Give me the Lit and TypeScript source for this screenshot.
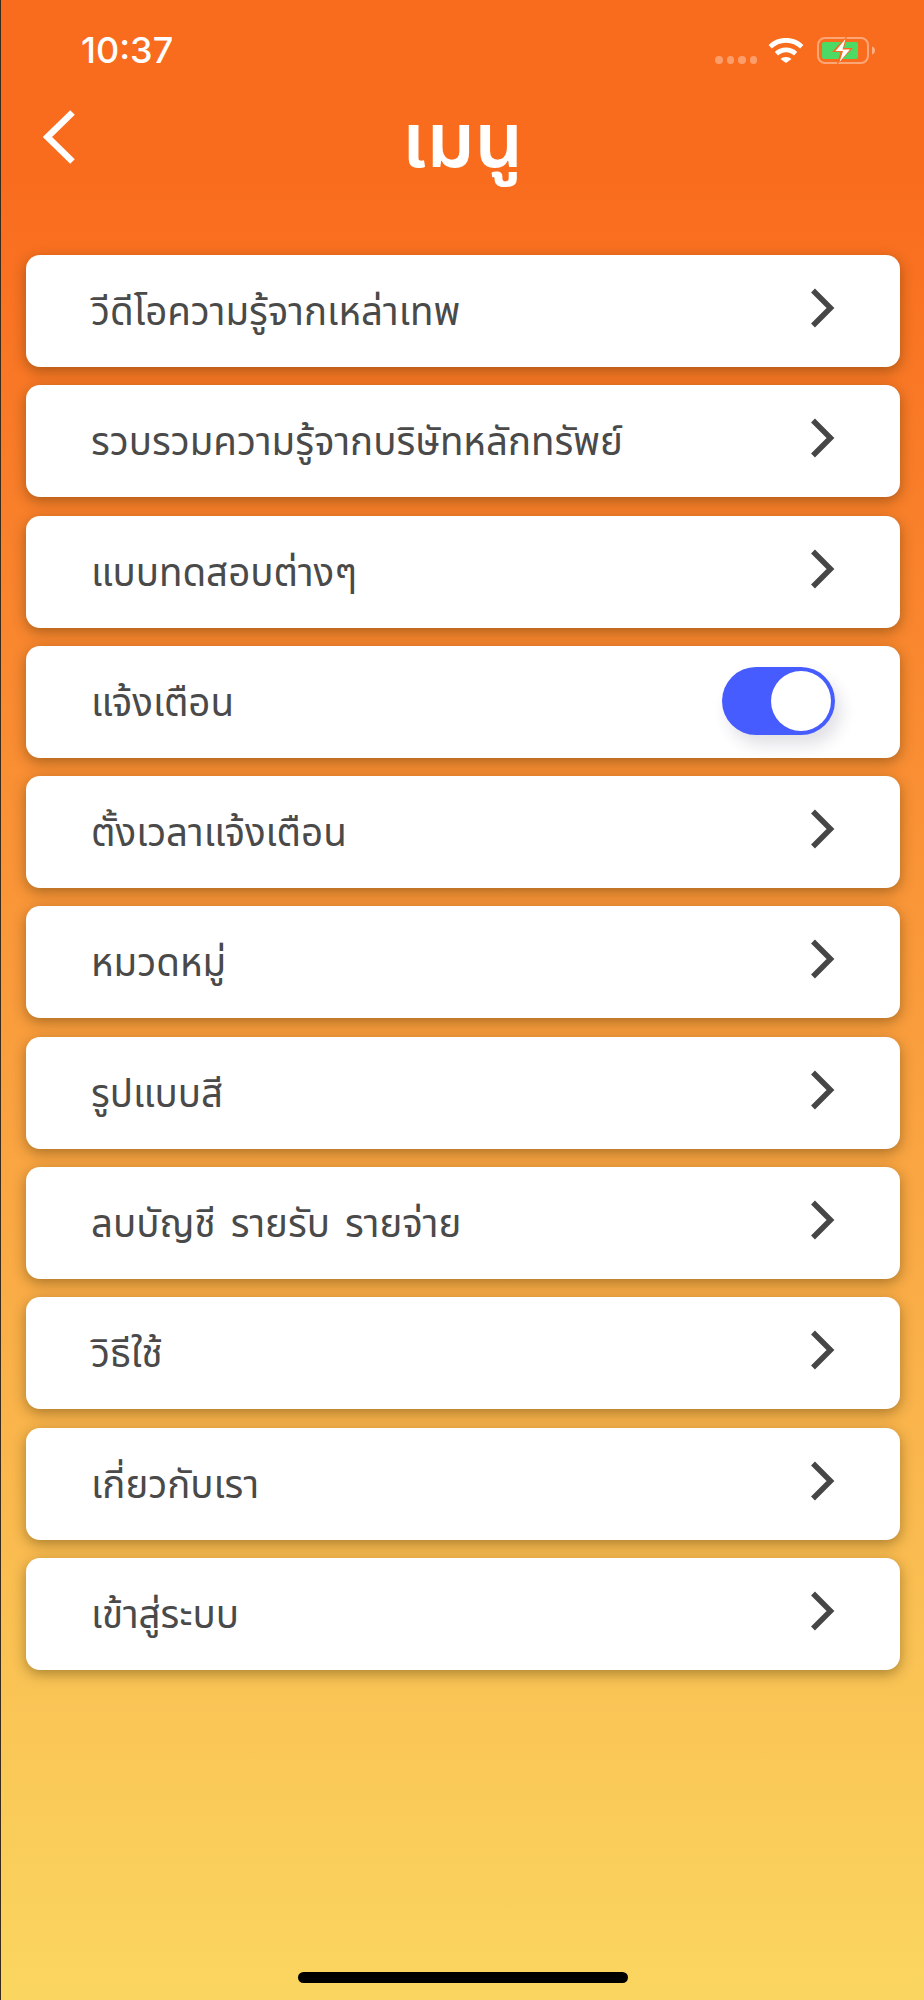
import { LitElement, html, css, svg } from 'lit';
import { customElement } from 'lit/decorators.js';

const items = [
  { label: 'วีดีโอความรู้จากเหล่าเทพ' },
  { label: 'รวบรวมความรู้จากบริษัทหลักทรัพย์' },
  { label: 'แบบทดสอบต่างๆ' },
  { label: 'แจ้งเตือน', toggle: true },
  { label: 'ตั้งเวลาแจ้งเตือน' },
  { label: 'หมวดหมู่' },
  { label: 'รูปแบบสี' },
  { label: 'ลบบัญชี รายรับ รายจ่าย' },
  { label: 'วิธีใช้' },
  { label: 'เกี่ยวกับเรา' },
  { label: 'เข้าสู่ระบบ' },
];

const chevron = html`<svg class="chevron" width="27" height="44" viewBox="0 0 27 44">
  <path d="M5 4.500 L22.500 22 L5 39.500" fill="none" stroke="#464646" stroke-width="5.500" />
</svg>`;

const wifi = svg`<path fill="#fff" d="M18 1C11 1 5 3.600 0.600 8l3.200 3.600C7.400 8 12.400 5.800 18 5.800s10.600 2.200 14.200 5.800L35.400 8C31 3.600 25 1 18 1z"/>
  <path fill="#fff" d="M18 10.500c-4.600 0-8.500 1.700-11.200 4.500l3.200 3.600c2-2 4.800-3.300 8-3.300s6 1.300 8 3.300l3.200-3.600c-2.700-2.800-6.600-4.500-11.200-4.500z"/>
  <path fill="#fff" d="M18 20c-2.300 0-4.200.8-5.500 2.100L18 26l5.500-3.900C22.200 20.800 20.300 20 18 20z"/>`;

@customElement('app-root')
export class AppRoot extends LitElement {
  static styles = css`
    :host {
      display: block;
      box-sizing: border-box;
      width: 924px;
      height: 2000px;
      border-left: 1px solid #3a2a1a;
      background: linear-gradient(180deg, #f96b1d 0%, #f96b1d 8%, #fad660 100%);
      font-family: 'Noto Sans', 'Noto Sans Thai', 'Liberation Sans', sans-serif;
      overflow: hidden;
    }
    .status {
      display: flex;
      align-items: flex-start;
      justify-content: space-between;
      padding: 29px 47px 0 80px;
      height: 61px;
    }
    .time {
      font-family: Inter, sans-serif;
      font-size: 36px;
      font-weight: 500;
      line-height: 42px;
      color: #fff;
    }
    .indicators {
      display: flex;
      align-items: flex-start;
      padding-top: 8px;
    }
    .dots {
      display: flex;
      gap: 4px;
      margin: 19px 11px 0 0;
    }
    .dots i {
      width: 7.500px;
      height: 7.500px;
      border-radius: 50%;
      background: rgba(255, 255, 255, 0.35);
    }
    .wifi {
      margin-right: 13px;
    }
    .header {
      display: flex;
      align-items: flex-start;
      justify-content: center;
      height: 165px;
    }
    .back {
      margin: 19px 0 0 42px;
    }
    .title {
      flex: 1;
      margin-right: 76px;
      text-align: center;
      color: #fff;
      font-size: 76px;
      font-weight: 600;
      line-height: 90px;
      padding-top: 3px;
    }
    .list {
      display: flex;
      flex-direction: column;
      gap: 18.300px;
      padding: 0 24px 0 25px;
    }
    .item {
      display: flex;
      align-items: center;
      justify-content: space-between;
      box-sizing: border-box;
      height: 112px;
      padding: 0 65px 0 65px;
      border-radius: 14px;
      background: #fff;
      box-shadow: 0 4px 14px rgba(60, 40, 0, 0.42);
    }
    .label {
      font-size: 38.500px;
      color: #4a4a4a;
      line-height: 50px;
      white-space: pre;
      word-spacing: 5px;
      padding-bottom: 2px;
    }
    .chevron {
      display: block;
      margin-top: -6px;
    }
    .toggle {
      box-sizing: border-box;
      display: flex;
      justify-content: flex-end;
      align-items: center;
      width: 113px;
      height: 68px;
      margin-top: -1px;
      padding-right: 4px;
      border-radius: 34px;
      background: #465cff;
      box-shadow: 6px 10px 16px rgba(40, 40, 80, 0.14);
    }
    .knob {
      width: 60px;
      height: 60px;
      border-radius: 50%;
      background: #fff;
    }
    .home-wrap {
      display: flex;
      justify-content: center;
      margin-top: 302px;
    }
    .home {
      width: 330px;
      height: 11px;
      border-radius: 6px;
      background: #000;
    }
  `;

  render() {
    return html`
      <div class="status">
        <span class="time">10:37</span>
        <div class="indicators">
          <div class="dots"><i></i><i></i><i></i><i></i></div>
          <svg class="wifi" width="36" height="27" viewBox="0 0 36 27">${wifi}</svg>
          <svg width="60" height="27" viewBox="0 0 60 27">
            <rect x="1" y="1" width="50" height="25" rx="7" fill="none" stroke="#fff" stroke-opacity=".4" stroke-width="2" />
            <rect x="5" y="5" width="36" height="17" rx="2" fill="#4cd964" />
            <path d="M55 9.500c2 .6 3 2 3 4s-1 3.400-3 4z" fill="#fff" fill-opacity=".45" />
            <path d="M30 -1 L15 15 H23.500 L19.500 28 L36 11 H27 Z" fill="#f96b1d" />
            <path d="M28.500 2 L18.500 14 H26 L22.500 25 L33 12.500 H25.500 Z" fill="#fff" />
          </svg>
        </div>
      </div>
      <div class="header">
        <svg class="back" width="34" height="56" viewBox="0 0 34 56">
          <path d="M29.500 3.500 L4.500 28 L29.500 52.500" fill="none" stroke="#fff" stroke-width="6.500" />
        </svg>
        <div class="title">เมนู</div>
      </div>
      <div class="list">
        ${items.map(
          (item) => html`<div class="item">
            <span class="label">${item.label}</span>
            ${item.toggle ? html`<div class="toggle"><div class="knob"></div></div>` : chevron}
          </div>`,
        )}
      </div>
      <div class="home-wrap"><div class="home"></div></div>
    `;
  }
}
